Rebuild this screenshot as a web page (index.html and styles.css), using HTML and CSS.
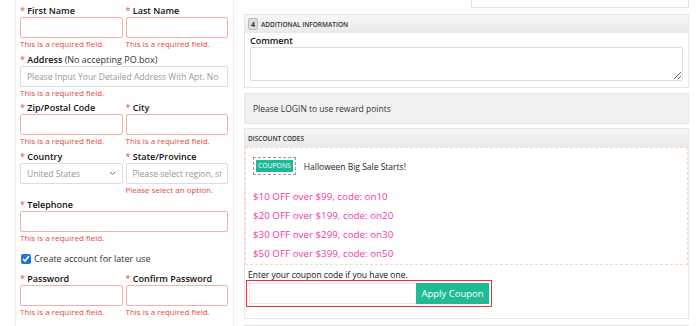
FILE: index.html
```html
<!doctype html>
<html lang="en">
    <head>
        <meta charset="UTF-8" />
        <meta name="viewport" content="width=device-width, initial-scale=1.0" />
        <title>Checkout</title>
        <link rel="stylesheet" href="styles.css">
    </head>
    <body>
        <div class="page">
            <div class="address-col">
                <div class="row">
                    <div class="field">
                        <label><span class="req">*</span> First Name</label>
                        <input class="input invalid" type="text" />
                        <div class="error">This is a required field.</div>
                    </div>
                    <div class="field">
                        <label><span class="req">*</span> Last Name</label>
                        <input class="input invalid" type="text" />
                        <div class="error">This is a required field.</div>
                    </div>
                </div>
                <div class="field">
                    <label><span class="req">*</span> Address <span class="hint">(No accepting PO.box)</span></label>
                    <input class="input" type="text" placeholder="Please Input Your Detailed Address With Apt. No" />
                    <div class="error">This is a required field.</div>
                </div>
                <div class="row">
                    <div class="field">
                        <label><span class="req">*</span> Zip/Postal Code</label>
                        <input class="input invalid" type="text" />
                        <div class="error">This is a required field.</div>
                    </div>
                    <div class="field">
                        <label><span class="req">*</span> City</label>
                        <input class="input invalid" type="text" />
                        <div class="error">This is a required field.</div>
                    </div>
                </div>
                <div class="row">
                    <div class="field">
                        <label><span class="req">*</span> Country</label>
                        <div class="select">
                            <span>United States</span>
                            <svg width="7" height="5" viewBox="0 0 7 5"><path d="M1 1l2.5 2.5L6 1" fill="none" stroke="#777" stroke-width="1"/></svg>
                        </div>
                        <div class="error"></div>
                    </div>
                    <div class="field">
                        <label><span class="req">*</span> State/Province</label>
                        <input class="input" type="text" placeholder="Please select region, state or province" />
                        <div class="error">Please select an option.</div>
                    </div>
                </div>
                <div class="field">
                    <label><span class="req">*</span> Telephone</label>
                    <input class="input invalid" type="text" />
                    <div class="error">This is a required field.</div>
                </div>
                <div class="check">
                    <input type="checkbox" checked />
                    <span>Create account for later use</span>
                </div>
                <div class="row">
                    <div class="field">
                        <label><span class="req">*</span> Password</label>
                        <input class="input invalid" type="password" />
                        <div class="error">This is a required field.</div>
                    </div>
                    <div class="field">
                        <label><span class="req">*</span> Confirm Password</label>
                        <input class="input invalid" type="password" />
                        <div class="error">This is a required field.</div>
                    </div>
                </div>
            </div>

            <div class="side-col">
                <div class="top-box"></div>

                <div class="panel">
                    <div class="panel-head"><span class="step">4</span>ADDITIONAL INFORMATION</div>
                    <div class="comment">
                        <div class="comment-label">Comment</div>
                        <textarea class="textarea"></textarea>
                    </div>
                </div>

                <div class="reward">Please LOGIN to use reward points</div>

                <div class="panel discount">
                    <div class="panel-head">DISCOUNT CODES</div>
                    <div class="offers">
                        <div class="promo">
                            <span class="coupon-tag"><span>COUPONS</span></span>
                            <span class="promo-title">Halloween Big Sale Starts!</span>
                        </div>
                        <div class="offer">$10 OFF over $99, code: on10</div>
                        <div class="offer">$20 OFF over $199, code: on20</div>
                        <div class="offer">$30 OFF over $299, code: on30</div>
                        <div class="offer">$50 OFF over $399, code: on50</div>
                    </div>
                    <div class="coupon-form">
                        <div class="coupon-label">Enter your coupon code if you have one.</div>
                        <div class="coupon-box">
                            <input class="coupon-input" type="text" />
                            <button class="coupon-btn">Apply Coupon</button>
                        </div>
                    </div>
                </div>
                <div class="next-panel"></div>
            </div>
        </div>
    </body>
</html>
```

FILE: styles.css
```css
html,
body {
    margin: 0;
    height: 100%;
    background: #fff;
    font-family: "Open Sans", Arial, sans-serif;
    color: #222;
    overflow: hidden;
}
.page {
    display: flex;
    align-items: flex-start;
}

/* left column */
.address-col {
    box-sizing: border-box;
    width: 219px;
    height: 326px;
    margin-left: 15px;
    padding: 4px 5px 0 4px;
    border-left: 1px solid #eee;
    border-right: 1px solid #eee;
}
.row {
    display: flex;
    gap: 3px;
}
.row .field {
    flex: 1;
    min-width: 0;
}
.field {
    margin-bottom: 3.5px;
}
.field label {
    display: block;
    font-size: 9px;
    line-height: 13px;
    font-weight: 600;
    color: #111;
    white-space: nowrap;
}
.req {
    color: #e5493a;
    font-weight: 400;
}
.hint {
    font-weight: 400;
    color: #333;
}
.input,
.select {
    display: block;
    box-sizing: border-box;
    width: 100%;
    height: 21px;
    margin: 0;
    padding: 0 6px;
    border: 1px solid #ddd;
    border-radius: 2px;
    background: #fff;
    font-family: inherit;
    font-size: 8.5px;
    outline: none;
}
.input::placeholder {
    color: #999;
}
.input.invalid {
    border-color: #f2b0a8;
}
.select {
    display: flex;
    align-items: center;
    justify-content: space-between;
    color: #999;
}
.error {
    height: 11px;
    font-size: 8px;
    line-height: 11px;
    color: #e5493a;
    white-space: nowrap;
}
.check {
    display: flex;
    align-items: center;
    gap: 3px;
    margin: 9px 0 6px;
    font-size: 9px;
    line-height: 14px;
    color: #333;
}
.check input {
    width: 10px;
    height: 10px;
    margin: 0 0 0 1px;
    accent-color: #1a73e8;
}

/* right column */
.side-col {
    width: 445px;
    margin-left: 10px;
}
.top-box {
    width: 218px;
    height: 8px;
    margin-left: auto;
    border: 1px solid #e4e4e4;
    border-top: 0;
    box-sizing: border-box;
    margin-bottom: 6px;
}
.panel {
    border: 1px solid #e6e6e6;
    background: #fff;
}
.panel-head {
    display: flex;
    align-items: center;
    height: 18px;
    padding: 0 3px;
    background: linear-gradient(#f7f7f7, #e9e9e9);
    font-size: 6.5px;
    font-weight: 600;
    color: #333;
}
.step {
    display: inline-flex;
    align-items: center;
    justify-content: center;
    box-sizing: border-box;
    width: 10px;
    height: 12px;
    margin-right: 3px;
    border: 1px solid #bbb;
    border-radius: 2px;
    background: #ddd;
    font-size: 7px;
    font-weight: 700;
}
.comment {
    padding: 2px 5px 6px 5px;
}
.comment-label {
    font-size: 9px;
    line-height: 12px;
    font-weight: 600;
    color: #111;
}
.textarea {
    display: block;
    box-sizing: border-box;
    width: 100%;
    height: 34px;
    margin: 0;
    border: 1px solid #ddd;
    border-radius: 2px;
}
.reward {
    box-sizing: border-box;
    height: 31px;
    margin-top: 5px;
    padding: 0 8px;
    display: flex;
    align-items: center;
    background: #f1f1f1;
    border: 1px solid #e8e8e8;
    font-size: 8.5px;
    color: #333;
}
.discount {
    margin-top: 4px;
}
.offers {
    padding: 9px 8px 1px 7px;
    border: 1px dashed #fcd8bc;
}
.promo {
    display: flex;
    align-items: center;
    gap: 8px;
    margin-bottom: 12px;
}
.coupon-tag {
    display: inline-flex;
    padding: 2px;
    border: 1px dashed #999;
}
.coupon-tag span {
    padding: 2px 2px;
    background: #20b796;
    color: #fff;
    font-size: 6.8px;
    line-height: 8px;
}
.promo-title {
    font-size: 8.5px;
    font-weight: 500;
    color: #222;
}
.offer {
    font-size: 9.8px;
    line-height: 19px;
    color: #f43aa6;
}
.coupon-form {
    padding: 5px 0 11px 3px;
}
.coupon-label {
    font-size: 8.5px;
    font-weight: 500;
    line-height: 10px;
    color: #111;
}
.coupon-box {
    display: flex;
    box-sizing: border-box;
    width: 246px;
    margin-left: -2px;
    padding: 2px;
    border: 1px solid #e33;
}
.coupon-input {
    flex: 1;
    min-width: 0;
    height: 21px;
    box-sizing: border-box;
    margin: 0;
    border: 1px solid #e8e8e8;
    border-right: 0;
    outline: none;
}
.coupon-btn {
    width: 73px;
    height: 21px;
    margin: 0;
    padding: 0;
    border: 0;
    background: #1fbb95;
    color: #fff;
    font-family: inherit;
    font-size: 9.5px;
    white-space: nowrap;
}
.next-panel {
    height: 10px;
    margin-top: 6px;
    border-top: 1px solid #e0e0e0;
}
```
